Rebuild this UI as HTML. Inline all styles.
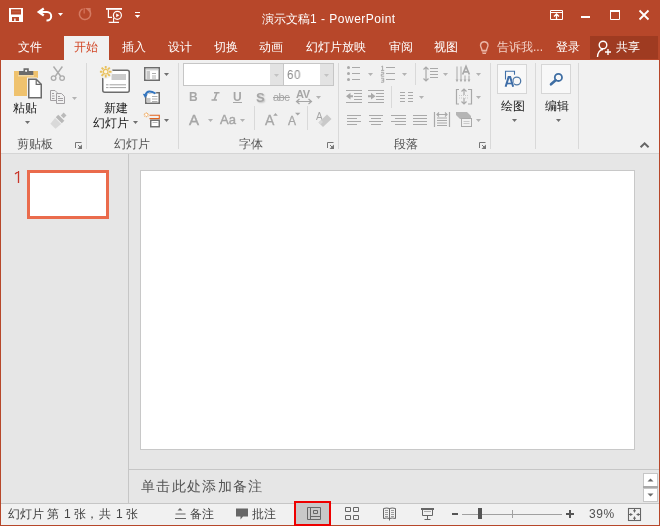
<!DOCTYPE html>
<html><head><meta charset="utf-8">
<style>
*{box-sizing:border-box}
html,body{margin:0;padding:0}
body{width:660px;height:526px;position:relative;overflow:hidden;background:#e6e6e6;font-family:"Liberation Sans",sans-serif;font-size:12px;color:#444}
.a{position:absolute}
.t{position:absolute;white-space:nowrap;line-height:1;will-change:transform}
#title{left:0;top:0;width:660px;height:60px;background:#b7472a}
.tab{color:#fff;font-size:12px}
#ribbon{left:1px;top:60px;width:658px;height:94px;background:#f1f1f1;border-bottom:1px solid #d5d5d5}
.sep{position:absolute;width:1px;background:#d6d6d6}
.gl{color:#555;font-size:12px}
.dd{position:absolute;width:5px;height:3px;background:#707070;clip-path:polygon(0 0,100% 0,50% 100%)}
.ddg{background:#b3b3b3}
</style></head><body>
<div id="title" class="a"></div>
<!-- left/right window borders -->
<div class="a" style="left:0;top:60px;width:1px;height:466px;background:#b7472a"></div>
<div class="a" style="left:659px;top:60px;width:1px;height:466px;background:#b7472a"></div>

<!-- QAT -->
<svg class="a" style="left:0;top:0" width="150" height="36" viewBox="0 0 150 36">
  <!-- save -->
  <path d="M9 8H23V22H9ZM11 9.3V14.5H21V9.3ZM12 17V21H19V17Z" fill="#fff" fill-rule="evenodd"/>
  <rect x="12" y="11.5" width="8" height="0.8" fill="#c96a50"/>
  <rect x="14.2" y="18.5" width="1.4" height="2.5" fill="#fff"/>
  <!-- undo -->
  <path d="M39.5 12H47A4.2 4.2 0 0 1 47 20.4H46.5" fill="none" stroke="#fff" stroke-width="2"/>
  <path d="M43.8 8.5L38.8 12L43.8 15.5" fill="none" stroke="#fff" stroke-width="2.3" stroke-linejoin="miter"/>
  <path d="M58 13H63L60.5 16Z" fill="#fff"/>
  <!-- redo disabled -->
  <path d="M82.6 8.9A5.6 5.6 0 1 0 88.4 9.5" fill="none" stroke="#d47a62" stroke-width="1.6"/>
  <path d="M84.2 8V13.5" stroke="#d26f55" stroke-width="1.4"/>
  <path d="M85 8H90.6V13Z" fill="#d47a62"/>
  <!-- slideshow from start -->
  <rect x="106" y="8" width="16" height="1.8" fill="#fff"/>
  <path d="M108.4 9.5V17.3H112" fill="none" stroke="#fff" stroke-width="1.2"/>
  <path d="M113.6 17.8V22M108.7 22.4H119" fill="none" stroke="#fff" stroke-width="1.1"/>
  <circle cx="117.4" cy="15.3" r="4" fill="#b7472a" stroke="#fff" stroke-width="1.2"/>
  <path d="M116.2 13.4V17.3L119.4 15.35Z" fill="#fff"/>
  <!-- customize -->
  <rect x="135" y="12" width="5" height="1" fill="#fff"/>
  <path d="M134.8 15H140.2L137.5 18Z" fill="#fff"/>
</svg>

<div class="t" style="left:262px;top:13px;color:#fff;font-size:12px">演示文稿<span style="letter-spacing:0.5px">1 - PowerPoint</span></div>

<!-- window controls -->
<svg class="a" style="left:540px;top:0" width="120" height="36" viewBox="0 0 120 36">
  <path d="M10.5 10.5H22.5V19.5H10.5ZM10.5 12.5H22.5" fill="none" stroke="#fff" stroke-width="1"/>
  <path d="M16.5 19V14.5M14 16.5L16.5 14L19 16.5" fill="none" stroke="#fff" stroke-width="1.3"/>
  <rect x="41" y="16" width="9" height="2" fill="#fff"/>
  <path d="M70.5 11.5H79.5V19.5H70.5Z" fill="none" stroke="#fff" stroke-width="1"/>
  <rect x="70" y="10" width="10" height="2" fill="#fff"/>
  <path d="M99.5 10.5L108.5 19.5M108.5 10.5L99.5 19.5" stroke="#fff" stroke-width="1.8"/>
</svg>

<!-- tabs -->
<div class="t tab" style="left:18px;top:41px">文件</div>
<div class="a" style="left:64px;top:36px;width:45px;height:24px;background:#f1f1f1"></div>
<div class="t tab" style="left:74px;top:41px;color:#d24726">开始</div>
<div class="t tab" style="left:122px;top:41px">插入</div>
<div class="t tab" style="left:168px;top:41px">设计</div>
<div class="t tab" style="left:214px;top:41px">切换</div>
<div class="t tab" style="left:259px;top:41px">动画</div>
<div class="t tab" style="left:306px;top:41px">幻灯片放映</div>
<div class="t tab" style="left:389px;top:41px">审阅</div>
<div class="t tab" style="left:434px;top:41px">视图</div>
<svg class="a" style="left:474px;top:36px" width="20" height="24" viewBox="0 0 20 24">
  <path d="M8 14.5C8 12.5 6.5 11.5 6.5 9A3.8 3.8 0 0 1 14 9C14 11.5 12.5 12.5 12.5 14.5Z" fill="none" stroke="#eab5a5" stroke-width="1.4"/>
  <path d="M8 16H12.5M8.5 17.5H12" stroke="#eab5a5" stroke-width="1.2"/>
</svg>
<div class="t tab" style="left:497px;top:41px;color:#f2d0c6">告诉我...</div>
<div class="t tab" style="left:556px;top:41px">登录</div>
<div class="a" style="left:590px;top:36px;width:68px;height:23px;background:#9f3b21"></div>
<svg class="a" style="left:590px;top:36px" width="24" height="24" viewBox="0 0 24 24">
  <circle cx="13" cy="9" r="3.8" fill="none" stroke="#fff" stroke-width="1.4"/>
  <path d="M7.5 21C7.5 16.5 10 13.5 13 13.5" fill="none" stroke="#fff" stroke-width="1.4"/>
  <path d="M18 13V19M15 16H21" stroke="#fff" stroke-width="1.4"/>
</svg>
<div class="t tab" style="left:616px;top:41px">共享</div>

<div id="ribbon" class="a"></div>



<!-- ribbon content -->
<svg class="a" style="left:0;top:0" width="660" height="155" viewBox="0 0 660 155">
  <!-- group separators -->
  <g fill="#d9d9d9">
    <rect x="86" y="63" width="1" height="86"/>
    <rect x="178" y="63" width="1" height="86"/>
    <rect x="338" y="63" width="1" height="86"/>
    <rect x="490" y="63" width="1" height="86"/>
    <rect x="535" y="63" width="1" height="86"/>
    <rect x="578" y="63" width="1" height="86"/>
    <rect x="254" y="106" width="1" height="24"/>
    <rect x="307" y="106" width="1" height="24"/>
    <rect x="415" y="63" width="1" height="22"/>
    <rect x="391" y="86" width="1" height="22"/>
  </g>
  <!-- dialog launchers -->
<path d="M75.5 148V142.5H81.5M78 145L80.5 147.5" fill="none" stroke="#777" stroke-width="1"/><path d="M82 144.5V149H77.5Z" fill="#777"/>
<path d="M327.5 148V142.5H333.5M330 145L332.5 147.5" fill="none" stroke="#777" stroke-width="1"/><path d="M334 144.5V149H329.5Z" fill="#777"/>
<path d="M479.5 148V142.5H485.5M482 145L484.5 147.5" fill="none" stroke="#777" stroke-width="1"/><path d="M486 144.5V149H481.5Z" fill="#777"/>
  <path d="M640.6 147.3L644.6 143.3L648.6 147.3" fill="none" stroke="#666" stroke-width="2"/>

  <!-- paste -->
  <rect x="14" y="71" width="24" height="25" fill="#efc26e"/>
  <rect x="18" y="75" width="16" height="1.5" fill="#f3d9a6"/>
  <path d="M19 71H23.5V68.2H28.8V71H33.3V75H19Z" fill="#6b6b6b"/>
  <circle cx="26.1" cy="70.8" r="1.1" fill="#f1f1f1"/>
  <path d="M27 77.5H37L43 83.5V99H27Z" fill="#f1f1f1"/>
  <path d="M28.75 79.25H36.2L41.25 84.3V97.75H28.75Z" fill="#fff" stroke="#6b6b6b" stroke-width="1.5"/>
  <path d="M36.2 79.25V84.3H41.25" fill="none" stroke="#6b6b6b" stroke-width="1.2"/>
  <!-- cut (disabled) -->
  <g fill="none" stroke="#ababab">
    <path d="M53.5 66.5L60.5 76M62.4 66.5L55.5 76" stroke-width="1.4"/>
    <circle cx="53.6" cy="78.1" r="2.3" stroke-width="1.3"/>
    <circle cx="62.1" cy="78.1" r="2.3" stroke-width="1.3"/>
  </g>
  <!-- copy -->
  <g fill="none" stroke="#a3a0a3" stroke-width="1">
    <path d="M50.5 90.5H55L57 92.5V100.5H50.5Z"/>
    <path d="M56.5 93.5H61.5L64.5 96.5V103.5H56.5Z" fill="#f1f1f1"/>
    <path d="M52 93.5H54M52 96H54.5M52 98.5H54.5M58 96.5H60M58 98.5H63M58 100.5H63"/>
  </g>
  <!-- format painter -->
  <g transform="translate(58.56 120.54) rotate(-45)">
    <rect x="5.2" y="-2" width="4" height="4" fill="#bababa"/>
    <rect x="0.3" y="-4.3" width="3.6" height="8.6" fill="#b8b8b8"/>
    <path d="M-0.6 -4.3L-8 -3.6V3.6L-0.6 4.3Z" fill="#d9d9d9"/>
  </g>
  <!-- new slide -->
  <rect x="102.75" y="70.25" width="26.5" height="22" rx="2" fill="#fff" stroke="#6d6d6d" stroke-width="1.5"/>
  <rect x="111.5" y="74" width="14.5" height="6" fill="#cbcbcb"/>
  <path d="M106 84.8H108.5M109.5 84.8H126M106 87.6H108.5M109.5 87.6H126" stroke="#8a8a8a" stroke-width="0.8"/>
  <circle cx="105.7" cy="71.7" r="7" fill="#f1f1f1"/>
  <path d="M108.90 71.70L111.50 71.70M107.96 73.96L109.80 75.80M105.70 74.90L105.70 77.50M103.44 73.96L101.60 75.80M102.50 71.70L99.90 71.70M103.44 69.44L101.60 67.60M105.70 68.50L105.70 65.90M107.96 69.44L109.80 67.60" stroke="#e9c15c" stroke-width="1.9" stroke-linecap="butt"/>
  <circle cx="105.7" cy="71.7" r="2.3" fill="#fdf6e6" stroke="#e9c15c" stroke-width="1.1"/>
  <!-- layout -->
  <rect x="144.75" y="67.75" width="14.5" height="12.5" fill="#fff" stroke="#6d6d6d" stroke-width="1.5"/>
  <path d="M146 69.8H158" stroke="#b0b0b0" stroke-width="0.8"/>
  <rect x="146.5" y="71" width="3.5" height="8" fill="#c8c8c8"/>
  <path d="M152 73.5H156M152 76H156M152 78H156" stroke="#9a9a9a" stroke-width="0.8"/>
  <!-- reset -->
  <rect x="145.75" y="92.75" width="13.5" height="10.5" fill="#fff" stroke="#6d6d6d" stroke-width="1.5"/>
  <rect x="147" y="98" width="3.5" height="4.5" fill="#c8c8c8"/>
  <path d="M152 96.5H157.5M152 99H157.5M152 101.5H157.5" stroke="#9a9a9a" stroke-width="0.8"/>
  <path d="M145.5 94.5Q148 88.8 155.5 93.5" fill="none" stroke="#f1f1f1" stroke-width="3.5"/>
  <path d="M145.5 94.5Q148 88.8 155.5 93.5" fill="none" stroke="#3375bf" stroke-width="2"/>
  <path d="M142.8 93.8L147.8 94.5L145 98Z" fill="#3375bf"/>
  <!-- section -->
  <g stroke="#f0a04b" stroke-width="0.9">
    <path d="M146.3 112.3V117.3M143.8 114.8H148.8M144.5 113L148.1 116.6M148.1 113L144.5 116.6"/>
  </g>
  <circle cx="146.3" cy="114.8" r="1.2" fill="#fff"/>
  <path d="M149.5 115.2H159.3V118.6H149.5" fill="none" stroke="#e2641f" stroke-width="1.1"/>
  <rect x="150.75" y="120.25" width="8.5" height="6.5" fill="#fff" stroke="#6d6d6d" stroke-width="1.4"/>
  <path d="M152.5 122.5H157.5" stroke="#aaa" stroke-width="0.8"/>

  <!-- font boxes -->
  <rect x="183.5" y="63.5" width="100" height="22" fill="#fff" stroke="#c6c6c6" stroke-width="1"/>
  <rect x="270" y="64" width="13" height="21" fill="#e3e3e3"/>
  <rect x="283.5" y="63.5" width="50" height="22" fill="#fff" stroke="#c6c6c6" stroke-width="1"/>
  <rect x="320" y="64" width="13" height="21" fill="#e3e3e3"/>

  <!-- paragraph icons -->
  <g fill="#a9a9a9">
    <circle cx="348.5" cy="67.5" r="1.5"/><circle cx="348.5" cy="73.5" r="1.5"/><circle cx="348.5" cy="79.5" r="1.5"/>
  </g>
  <g stroke="#a9a9a9" stroke-width="1.2">
    <path d="M352 67.5H360M352 73.5H360M352 79.5H360"/>
    <path d="M386 67.5H395M386 73.5H395M386 79.5H395"/>
  </g>
  <g stroke="#a9a9a9" stroke-width="1" fill="none">
    <path d="M381.3 66.8L382.6 66V70.4M381 70.4H384.2"/>
    <path d="M381 72.3H383.7V74.2H381.3V76.2H384.2"/>
    <path d="M381 78.2H383.7V82.2H381M381.6 80.2H383.7"/>
  </g>
  <!-- indent -->
  <g stroke="#a9a9a9" stroke-width="1.2">
    <path d="M346 90.5H362M354 93.5H362M354 96.5H362M354 99.5H362M346 102.5H362"/>
    <path d="M368 90.5H384M376 93.5H384M376 96.5H384M376 99.5H384M368 102.5H384"/>
  </g>
  <path d="M346 96.2L350.5 92.8V95.2H353V97.2H350.5V99.6Z" fill="#a9a9a9"/>
  <path d="M375.5 96.2L371 92.8V95.2H368V97.2H371V99.6Z" fill="#a9a9a9"/>
  <!-- columns -->
  <g stroke="#a9a9a9" stroke-width="1.2">
    <path d="M400 92.5H405M408 92.5H413M400 95.5H405M408 95.5H413M400 98.5H405M408 98.5H413M400 101.5H405M408 101.5H413"/>
  </g>
  <!-- align -->
  <g stroke="#a9a9a9" stroke-width="1.2">
    <path d="M347 115.5H361M347 118.5H357M347 121.5H361M347 124.5H357"/>
    <path d="M369 115.5H383M371 118.5H381M369 121.5H383M371 124.5H381"/>
    <path d="M391 115.5H406M395 118.5H406M391 121.5H406M395 124.5H406"/>
    <path d="M413 115.5H427M413 118.5H427M413 121.5H427M413 124.5H427"/>
  </g>
  <!-- distributed -->
  <g stroke="#a9a9a9" stroke-width="1.2" fill="none">
    <path d="M434.5 112V127M449.5 112V127"/>
    <path d="M437 118H447M437 120.5H447M437 123H447M437 125.5H447"/>
    <path d="M437 114.5H447M439 112.5L437 114.5L439 116.5M445 112.5L447 114.5L445 116.5"/>
  </g>
  <!-- line spacing -->
  <g stroke="#a9a9a9" stroke-width="1.2" fill="none">
    <path d="M426 67V81M423.5 69.5L426 67L428.5 69.5M423.5 78.5L426 81L428.5 78.5"/>
    <path d="M430 68.5H438M430 71.5H438M430 74.5H438M430 77.5H438"/>
  </g>
  <!-- text direction -->
  <g stroke="#a9a9a9" stroke-width="1.2" fill="none">
    <path d="M457 66.5V80M461 66.5V80M465 75.5V80M469 75.5V80" stroke-width="1"/>
    
    <path d="M462.6 74.5L466 66.5L469.4 74.5M463.8 71.8H468.2" stroke-width="1.7"/>
  </g>
  <path d="M455.6 79.5H458.4L457 82.3ZM459.6 79.5H462.4L461 82.3ZM463.6 79.5H466.4L465 82.3ZM467.6 79.5H470.4L469 82.3Z" fill="#a9a9a9"/>
  <!-- align text -->
  <g stroke="#a9a9a9" stroke-width="1.2" fill="none">
    <path d="M459 89.5H456.5V104H459M468 89.5H471.5V104H468"/>
    <path d="M464 89V95M461.5 91.5L464 89L466.5 91.5M464 98V104M461.5 101.5L464 104L466.5 101.5"/>
  </g>
  <path d="M459 95.5H469M459 98H469" stroke="#b9b9b9" stroke-width="0.7" stroke-dasharray="1 1"/>
  <!-- smartart -->
  <path d="M456 112H467L471 116V119H460L456 115Z" fill="#b5b5b5"/>
  <rect x="461.5" y="118.5" width="10" height="8" fill="#f1f1f1" stroke="#a9a9a9" stroke-width="1"/>
  <path d="M463.5 121.5H469.5M463.5 123.5H469.5" stroke="#b9b9b9" stroke-width="0.7"/>

  <!-- drawing & editing buttons -->
  <rect x="497.5" y="64.5" width="29" height="29" fill="#f8f8f8" stroke="#d6d6d6" stroke-width="1"/>
  <rect x="541.5" y="64.5" width="29" height="29" fill="#f8f8f8" stroke="#d6d6d6" stroke-width="1"/>
  <path d="M505.5 79.5V71.2H514.5V74.7" fill="none" stroke="#4070a8" stroke-width="1.1"/>
  <circle cx="516.8" cy="81" r="3.9" fill="none" stroke="#4d77a6" stroke-width="1.3"/>
  <path d="M503.5 88L508 76.5H511L515.5 88Z" fill="#f8f8f8"/>
  <path d="M505.6 86.8L508.6 77.1H510.2L513.2 86.8" fill="none" stroke="#3f6ea8" stroke-width="2"/>
  <path d="M506.6 83.5H512" stroke="#3f6ea8" stroke-width="1.6"/>
  <circle cx="558.4" cy="77.4" r="3.6" fill="none" stroke="#3f6ea3" stroke-width="1.8"/>
  <path d="M551 84.3L555.6 80.2" stroke="#3f6ea3" stroke-width="2.6" stroke-linecap="round"/>
</svg>
<!-- dropdown arrows in ribbon -->
<div class="dd" style="left:25px;top:121px"></div>
<div class="dd ddg" style="left:72px;top:97px"></div>
<div class="dd" style="left:133px;top:121px"></div>
<div class="dd" style="left:164px;top:73px"></div>
<div class="dd" style="left:164px;top:119px"></div>
<div class="dd" style="left:274px;top:74px;background:#c3c3c3"></div>
<div class="dd" style="left:324px;top:74px;background:#c3c3c3"></div>
<div class="dd ddg" style="left:316px;top:96px"></div>
<div class="dd ddg" style="left:208px;top:119px"></div>
<div class="dd ddg" style="left:240px;top:119px"></div>
<div class="dd ddg" style="left:368px;top:73px"></div>
<div class="dd ddg" style="left:402px;top:73px"></div>
<div class="dd ddg" style="left:419px;top:96px"></div>
<div class="dd ddg" style="left:443px;top:73px"></div>
<div class="dd ddg" style="left:476px;top:73px"></div>
<div class="dd ddg" style="left:476px;top:96px"></div>
<div class="dd ddg" style="left:476px;top:119px"></div>
<div class="dd" style="left:512px;top:119px"></div>
<div class="dd" style="left:556px;top:119px"></div>

<!-- ribbon labels -->
<div class="t" style="left:13px;top:102px;font-size:12px;color:#1a1a1a">粘贴</div>
<div class="t" style="left:104px;top:102px;font-size:12px;color:#1a1a1a">新建</div>
<div class="t" style="left:93px;top:117px;font-size:12px;color:#1a1a1a">幻灯片</div>
<div class="t" style="left:501px;top:100px;font-size:12px;color:#1a1a1a">绘图</div>
<div class="t" style="left:545px;top:100px;font-size:12px;color:#1a1a1a">编辑</div>
<div class="t gl" style="left:17px;top:138px">剪贴板</div>
<div class="t gl" style="left:114px;top:138px">幻灯片</div>
<div class="t gl" style="left:239px;top:138px">字体</div>
<div class="t gl" style="left:394px;top:138px">段落</div>
<div class="t" style="left:287px;top:69px;font-size:12px;color:#8c8c8c;letter-spacing:0.8px;transform:scaleX(0.95);transform-origin:0 0">60</div>
<!-- font formatting -->
<div class="t" style="left:189px;top:91px;font-size:12px;font-weight:bold;color:#a6a6a6">B</div>
<svg class="a" style="left:205px;top:86px" width="20" height="20" viewBox="205 86 20 20"><path d="M214 92.8H219.5M211.5 100H217M217 92.8L214.2 100" fill="none" stroke="#a6a6a6" stroke-width="1.6"/></svg>
<div class="t" style="left:233px;top:91px;font-size:12px;font-weight:bold;color:#a6a6a6">U</div>
<div class="t" style="left:256px;top:91px;font-size:13px;font-weight:bold;color:#a6a6a6;text-shadow:1px 1px 1.5px #c4c4c4">S</div>
<div class="t" style="left:273px;top:92px;font-size:11px;color:#a6a6a6;letter-spacing:-0.5px">abc</div>
<div class="t" style="left:296px;top:89px;font-size:11px;font-weight:bold;color:#a6a6a6;letter-spacing:-0.5px">AV</div>
<div class="t" style="left:189px;top:112px;font-size:15px;color:#a6a6a6;-webkit-text-stroke:0.4px #a6a6a6">A</div>
<div class="t" style="left:220px;top:113px;font-size:13px;color:#a6a6a6;-webkit-text-stroke:0.4px #a6a6a6">Aa</div>
<div class="t" style="left:265px;top:113px;font-size:14px;color:#a6a6a6;-webkit-text-stroke:0.3px #a6a6a6">A</div>
<div class="t" style="left:288px;top:115px;font-size:12px;color:#a6a6a6;-webkit-text-stroke:0.3px #a6a6a6">A</div>
<div class="t" style="left:316px;top:112px;font-size:10px;color:#a6a6a6">A</div>
<svg class="a" style="left:0;top:0" width="660" height="155" viewBox="0 0 660 155">
  <rect x="233" y="102" width="9" height="1" fill="#a6a6a6"/>
  <rect x="273" y="97" width="17" height="1" fill="#a6a6a6"/>
  <path d="M297 101.5H311M299.5 99L296.5 101.5L299.5 104M308.5 99L311.5 101.5L308.5 104" fill="none" stroke="#a6a6a6" stroke-width="1.2"/>
  <path d="M273.2 115.7H277.8L275.5 113Z" fill="#a6a6a6"/>
  <path d="M295 112.8H300.4L297.7 115.5Z" fill="#a6a6a6"/>
  <path d="M323 127L318.5 122.5L327 114.5L331.5 119Z" fill="#c9c9c9"/>
  <path d="M320.5 124.5L318.5 122.5L321 120L323 122Z" fill="#d8d8d8"/>
</svg>
<!-- main area -->
<div class="a" style="left:128px;top:154px;width:1px;height:349px;background:#c6c6c6"></div>
<!-- thumbnail -->
<svg class="a" style="left:10px;top:168px" width="14" height="18" viewBox="10 168 14 18"><path d="M18.5 171V183M15 174L18.3 171.5" fill="none" stroke="#c8362a" stroke-width="1.3"/></svg>
<div class="a" style="left:27px;top:170px;width:82px;height:49px;border:3px solid #ea6b4c;background:#fff"></div>
<!-- slide -->
<div class="a" style="left:140px;top:170px;width:495px;height:280px;border:1px solid #c8c8c8;background:#fff"></div>
<!-- notes -->
<div class="a" style="left:129px;top:469px;width:530px;height:1px;background:#c6c6c6"></div>
<div class="t" style="left:141px;top:479px;font-size:14px;color:#555;letter-spacing:1.35px">单击此处添加备注</div>
<div class="a" style="left:643px;top:473px;width:15px;height:14px;background:#fff;border:1px solid #c6c6c6"></div>
<div class="a" style="left:643px;top:488px;width:15px;height:14px;background:#fff;border:1px solid #c6c6c6"></div>
<div class="a" style="left:643px;top:486px;width:15px;height:2px;background:#a9a9a9"></div>
<svg class="a" style="left:643px;top:473px" width="15" height="30"><path d="M4.5 8.5H10.5L7.5 5.5Z" fill="#6b6b6b"/><path d="M4.5 20.5H10.5L7.5 23.5Z" fill="#6b6b6b"/></svg>

<!-- status bar -->
<div class="a" style="left:1px;top:503px;width:658px;height:1px;background:#c6c6c6"></div>
<div class="a" style="left:1px;top:504px;width:658px;height:21px;background:#f1f1f1"></div>
<div class="a" style="left:0;top:525px;width:660px;height:1px;background:#b7472a"></div>
<div class="t" style="left:8px;top:508px;font-size:12px;color:#444">幻灯片 第</div>
<div class="t" style="left:64px;top:508px;font-size:12px;color:#444">1</div>
<div class="t" style="left:74px;top:508px;font-size:12px;color:#444">张</div>
<div class="t" style="left:86px;top:508px;font-size:12px;color:#444">，</div>
<div class="t" style="left:99px;top:508px;font-size:12px;color:#444">共</div>
<div class="t" style="left:116px;top:508px;font-size:12px;color:#444">1</div>
<div class="t" style="left:126px;top:508px;font-size:12px;color:#444">张</div>
<svg class="a" style="left:170px;top:502px" width="20" height="22" viewBox="170 502 20 22">
  <path d="M177.5 510.5H182.5L180 508Z" fill="#666"/>
  <path d="M175.5 514H185.5M175 518.5H186" stroke="#666" stroke-width="1"/>
</svg>
<div class="t" style="left:190px;top:508px;color:#444">备注</div>
<svg class="a" style="left:234px;top:504px" width="18" height="20" viewBox="234 504 18 20">
  <path d="M236 508.5H248V516.5H243L240.5 519.5V516.5H236Z" fill="#666"/>
</svg>
<div class="t" style="left:252px;top:508px;color:#444">批注</div>
<div class="a" style="left:294px;top:501px;width:37px;height:25px;border:2px solid #e00;background:#c8c8c8"></div>
<svg class="a" style="left:300px;top:504px" width="28" height="20" viewBox="0 0 28 20">
  <path d="M7.5 3.5H20.5V15.5H7.5ZM10.5 3.5V15.5M10.5 12.5H20.5M13.5 6.5H17.5V9.5H13.5Z" fill="none" stroke="#666" stroke-width="1"/>
</svg>
<svg class="a" style="left:340px;top:504px" width="120" height="20" viewBox="340 504 120 20">
  <path d="M345.5 507.5H350.5V511.5H345.5ZM353.5 507.5H358.5V511.5H353.5ZM345.5 515.5H350.5V519.5H345.5ZM353.5 515.5H358.5V519.5H353.5Z" fill="none" stroke="#666" stroke-width="1"/>
  <path d="M383.5 508.5Q387 507.5 389.5 508.5V518.5Q387 517.5 383.5 518.5ZM395.5 508.5Q392 507.5 389.5 508.5V518.5Q392 517.5 395.5 518.5Z" fill="none" stroke="#666" stroke-width="1"/>
  <path d="M385 510.5H388M385 512.5H388M385 514.5H388M385 516.5H388M391 510.5H394M391 512.5H394M391 514.5H394M391 516.5H394" stroke="#888" stroke-width="0.8"/>
  <path d="M389.5 518V520.5" stroke="#666" stroke-width="1"/>
  <rect x="421" y="508" width="13" height="2" fill="#666"/>
  <path d="M422.5 509V515.5H432.5V509M427.5 515.5V519M424.5 519.5H430.5" fill="none" stroke="#666" stroke-width="1"/>
  <path d="M424 511.5H431" stroke="#999" stroke-width="0.8"/>
  <rect x="452" y="513" width="6" height="2" fill="#555"/>
</svg>
<div class="a" style="left:462px;top:514px;width:100px;height:1px;background:#a0a0a0"></div>
<div class="a" style="left:512px;top:510px;width:1px;height:8px;background:#a0a0a0"></div>
<div class="a" style="left:478px;top:508px;width:4px;height:11px;background:#555"></div>
<svg class="a" style="left:564px;top:504px" width="14" height="20"><path d="M2 10H10M6 6V14" stroke="#555" stroke-width="2"/></svg>
<div class="t" style="left:589px;top:508px;font-size:12px;color:#505050;letter-spacing:0.6px">39%</div>
<svg class="a" style="left:624px;top:504px" width="20" height="20" viewBox="624 504 20 20">
  <rect x="628.5" y="508.5" width="12" height="12" fill="none" stroke="#666" stroke-width="1.1"/>
  <path d="M634.5 509V512.5M633 510.8H636M634.5 516.5V520M633 518.2H636M629 514.5H632.5M630.8 513V516M636.5 514.5H640M638.2 513V516" stroke="#666" stroke-width="1"/>
</svg>
</body></html>
